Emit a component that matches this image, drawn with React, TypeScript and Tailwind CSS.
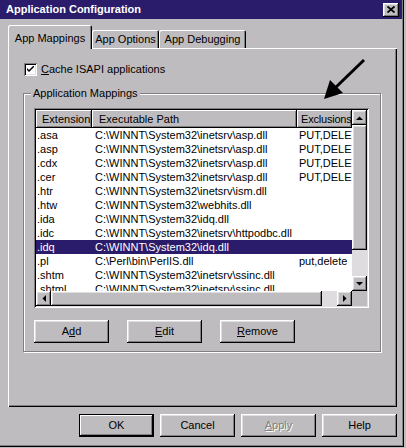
import React from "react";

const bevel =
  "shadow-[inset_-1px_-1px_0_#000,inset_1px_1px_0_#fff,inset_-2px_-2px_0_#808080,inset_2px_2px_0_#dfdfdf]";
const sunken =
  "shadow-[inset_1px_1px_0_#808080,inset_-1px_-1px_0_#fff,inset_2px_2px_0_#000,inset_-2px_-2px_0_#dfdfdf]";

const rows: [string, string, string][] = [
  [".asa", "C:\\WINNT\\System32\\inetsrv\\asp.dll", "PUT,DELETE"],
  [".asp", "C:\\WINNT\\System32\\inetsrv\\asp.dll", "PUT,DELETE"],
  [".cdx", "C:\\WINNT\\System32\\inetsrv\\asp.dll", "PUT,DELETE"],
  [".cer", "C:\\WINNT\\System32\\inetsrv\\asp.dll", "PUT,DELETE"],
  [".htr", "C:\\WINNT\\System32\\inetsrv\\ism.dll", ""],
  [".htw", "C:\\WINNT\\System32\\webhits.dll", ""],
  [".ida", "C:\\WINNT\\System32\\idq.dll", ""],
  [".idc", "C:\\WINNT\\System32\\inetsrv\\httpodbc.dll", ""],
  [".idq", "C:\\WINNT\\System32\\idq.dll", ""],
  [".pl", "C:\\Perl\\bin\\PerlIS.dll", "put,delete"],
  [".shtm", "C:\\WINNT\\System32\\inetsrv\\ssinc.dll", ""],
  [".shtml", "C:\\WINNT\\System32\\inetsrv\\ssinc.dll", ""],
];

function Arrow({ dir }: { dir: "up" | "down" | "left" | "right" }) {
  const pts = {
    up: "0,4 7,4 3.5,0.5",
    down: "0,0 7,0 3.5,3.5",
    left: "4,0 4,7 0.5,3.5",
    right: "0,0 0,7 3.5,3.5",
  }[dir];
  const w = dir === "up" || dir === "down" ? 7 : 4;
  const h = dir === "up" || dir === "down" ? 4 : 7;
  return (
    <div className={`flex h-[15px] w-[15px] shrink-0 items-center justify-center bg-[#bfbcbf] ${bevel}`}>
      <svg width={w} height={h} viewBox={`0 0 ${w} ${h}`}>
        <polygon points={pts} fill="#000" />
      </svg>
    </div>
  );
}

function Button({ children, def, disabled }: { children: React.ReactNode; def?: boolean; disabled?: boolean }) {
  return (
    <div
      className={`flex h-[23px] w-[75px] items-center justify-center bg-[#bfbcbf] ${
        def
          ? "shadow-[inset_0_0_0_1px_#000,inset_-2px_-2px_0_#000,inset_2px_2px_0_#fff,inset_-3px_-3px_0_#808080]"
          : bevel
      } ${disabled ? "text-[#808080] [text-shadow:1px_1px_0_#fff]" : "text-black"}`}
    >
      {children}
    </div>
  );
}

function HeaderCell({ children, className }: { children: React.ReactNode; className: string }) {
  return (
    <div
      className={`flex h-[18px] items-center whitespace-nowrap bg-[#bfbcbf] shadow-[inset_-1px_-1px_0_#000,inset_1px_1px_0_#fff,inset_-2px_-2px_0_#808080] ${className}`}
    >
      {children}
    </div>
  );
}

export default function App() {
  return (
    <div className="relative h-[448px] w-[406px] overflow-hidden bg-[#bfbcbf] font-['Liberation_Sans',Arial,sans-serif] text-[11px] leading-none text-black">
      <div className="h-[447px] w-[404px] border-r border-b border-black">
        <div className="h-full w-full border-r border-b border-[#808080]">
          {/* Title bar */}
          <div className="flex h-[19px] items-center justify-between bg-[#2b1c6b] pl-[6px] pr-[3px]">
            <span className="font-bold text-white">Application Configuration</span>
            <div className={`flex h-[14px] w-[16px] items-center justify-center bg-[#bfbcbf] ${bevel}`}>
              <svg width="8" height="7" viewBox="0 0 8 7">
                <path d="M0.5 0.5 L7.5 6.5 M7.5 0.5 L0.5 6.5" stroke="#000" strokeWidth="1.8" />
              </svg>
            </div>
          </div>

          {/* Tabs */}
          <div className="mt-[6px] ml-[8px] flex h-[23px] items-end">
            <div className="relative z-10 -mb-[1px] flex h-[24px] w-[84px] justify-center rounded-t-[2px] bg-[#bfbcbf] pt-[8px] shadow-[inset_1px_1px_0_#fff,inset_-1px_0_0_#000,inset_-2px_0_0_#808080]">
              App Mappings
            </div>
            <div className="flex h-[18px] w-[67px] justify-center rounded-t-[2px] pt-[4px] shadow-[inset_1px_1px_0_#fff,inset_-1px_0_0_#000,inset_-2px_0_0_#808080]">
              App Options
            </div>
            <div className="flex h-[18px] w-[87px] justify-center rounded-t-[2px] pt-[4px] shadow-[inset_1px_1px_0_#fff,inset_-1px_0_0_#000,inset_-2px_0_0_#808080]">
              App Debugging
            </div>
          </div>

          {/* Tab panel */}
          <div className="ml-[8px] h-[359px] w-[389px] pt-[15px] pl-[16px] shadow-[inset_1px_1px_0_#fff,inset_-1px_-1px_0_#000,inset_-2px_-2px_0_#808080]">
            <div className="flex h-[13px] items-center gap-[4px]">
              <div className={`flex h-[13px] w-[13px] items-center justify-center bg-white ${sunken}`}>
                <svg width="7" height="7" viewBox="0 0 7 7">
                  <path d="M0 2 L0 4 L2 6 L7 1 L7 -1 L2 4 Z" fill="#000" />
                </svg>
              </div>
              <span>
                <span className="underline">C</span>ache ISAPI applications
              </span>
            </div>

            {/* Group box */}
            <div className="relative mt-[17px] -ml-[1px] h-[259px] w-[358px] border border-[#808080] pt-[14px] pl-[10px] shadow-[1px_1px_0_#fff,inset_1px_1px_0_#fff]">
              <span className="absolute -top-[6px] left-[7px] bg-[#bfbcbf] px-[2px]">Application Mappings</span>

              {/* List view */}
              <div className={`h-[200px] w-[335px] p-[2px] ${sunken}`}>
                <div className="grid h-full w-full grid-cols-[1fr_15px] grid-rows-[1fr_15px]">
                  <div className="overflow-hidden bg-white">
                    <div className="flex">
                      <HeaderCell className="w-[56px] pl-[6px]">Extension</HeaderCell>
                      <HeaderCell className="w-[205px] pl-[7px]">Executable Path</HeaderCell>
                      <HeaderCell className="flex-1 pl-[4px] tracking-[-0.2px]">Exclusions</HeaderCell>
                    </div>
                    {rows.map(([ext, path, excl]) => {
                      const sel = ext === ".idq";
                      return (
                        <div
                          key={ext}
                          className={`flex h-[14px] items-center whitespace-nowrap ${
                            sel ? "bg-[#2b1c6b] text-white" : ""
                          }`}
                        >
                          <div className="w-[56px] overflow-hidden pl-[1px]">{ext}</div>
                          <div className="w-[205px] overflow-hidden pl-[3px]">{path}</div>
                          <div className="flex-1 overflow-hidden pl-[2px]">{excl}</div>
                        </div>
                      );
                    })}
                  </div>

                  {/* Vertical scrollbar */}
                  <div className="flex flex-col">
                    <Arrow dir="up" />
                    <div className={`h-[125px] bg-[#bfbcbf] ${bevel}`} />
                    <div className="flex-1 bg-[#dedcde]" />
                    <Arrow dir="down" />
                  </div>

                  {/* Horizontal scrollbar */}
                  <div className="flex">
                    <Arrow dir="left" />
                    <div className={`w-[271px] bg-[#bfbcbf] ${bevel}`} />
                    <div className="flex-1 bg-[#dedcde]" />
                    <Arrow dir="right" />
                  </div>
                  <div className="bg-[#bfbcbf]" />
                </div>
              </div>

              <div className="mt-[12px] flex gap-[18px]">
                <Button>
                  A<span className="underline">d</span>d
                </Button>
                <Button>
                  <span className="underline">E</span>dit
                </Button>
                <Button>
                  <span className="underline">R</span>emove
                </Button>
              </div>
            </div>
          </div>

          {/* Dialog buttons */}
          <div className="mt-[7px] flex justify-end gap-[6px] pr-[5px]">
            <Button def>OK</Button>
            <Button>Cancel</Button>
            <Button disabled>
              <span className="underline">A</span>pply
            </Button>
            <Button>Help</Button>
          </div>
        </div>
      </div>

      {/* Annotation arrow */}
      <svg className="absolute left-[318px] top-[56px]" width="50" height="46" viewBox="318 56 50 46">
        <line x1="364" y1="60" x2="334" y2="89" stroke="#000" strokeWidth="3" />
        <polygon points="324,99 330,80 343,93" fill="#000" />
      </svg>
    </div>
  );
}
